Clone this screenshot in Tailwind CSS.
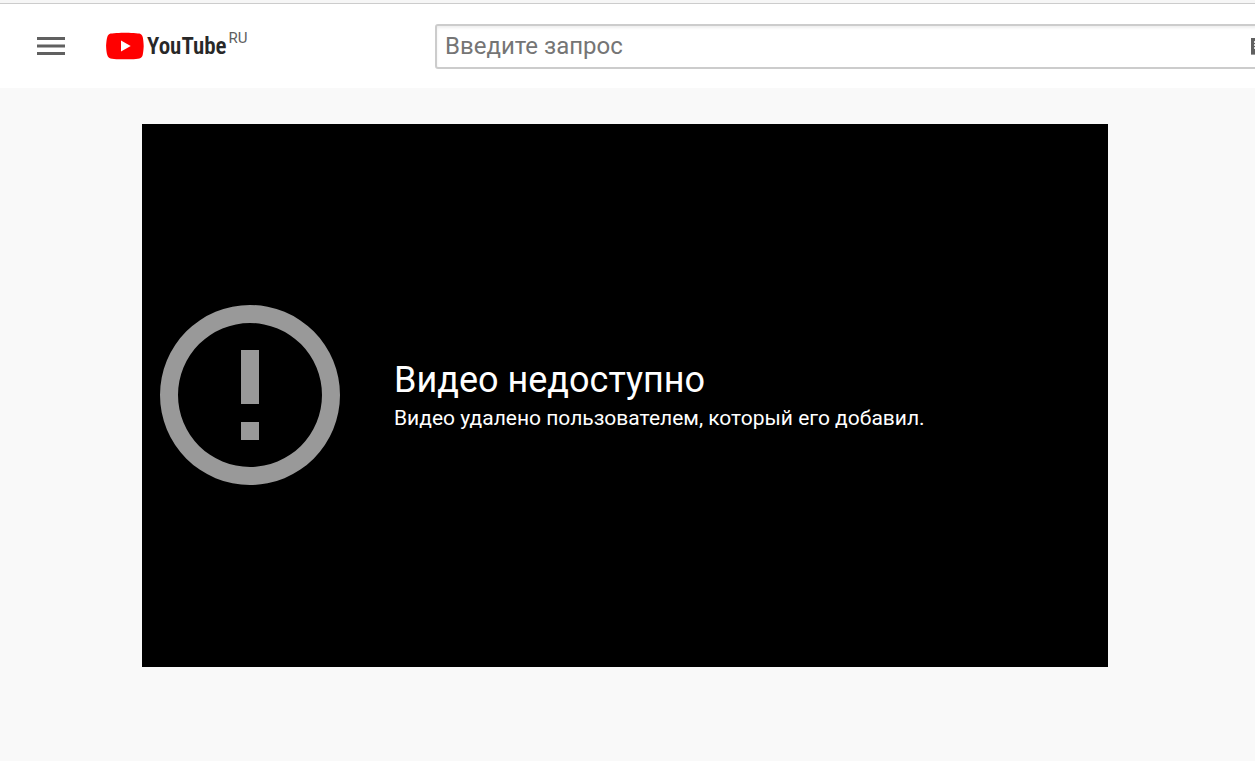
<!DOCTYPE html>
<html lang="ru">
<head>
<meta charset="utf-8">
<meta name="viewport" content="width=device-width, initial-scale=1">
<title>YouTube</title>
<script src="https://cdn.jsdelivr.net/npm/@tailwindcss/browser@4"></script>
</head>
<body class="min-h-screen overflow-x-hidden bg-[#f9f9f9] font-['Roboto',sans-serif]">
<div class="h-1 border-b border-[#cccccc] bg-[#f6f6f6]"></div>
<header class="flex h-21 items-center overflow-hidden bg-white pl-[33px]">
  <button type="button" aria-label="Меню" class="shrink-0">
    <svg class="size-9" viewBox="0 0 36 36" fill="#606060"><path d="M4 9h28v3H4zM4 16.500h28v3H4zM4 24h28v3H4z"/></svg>
  </button>
  <a href="#" class="ml-9 flex w-[329px] shrink-0 items-center">
    <svg class="h-7 w-10 shrink-0" viewBox="0 0 40 28"><path fill="#f00" d="M37.700 5c-.4-1.700-1.700-3-3.300-3.400C31.500.8 20 .7 20 .7S8.500.8 5.600 1.600C4 2 2.700 3.300 2.300 5 1.300 8 1.100 14 1.100 14s.2 6 1.200 9c.4 1.700 1.700 3 3.300 3.400 2.900.8 14.400.9 14.400.9s11.500-.1 14.400-.9c1.600-.4 2.900-1.700 3.300-3.400.8-3 1-9 1-9s-.2-6-1-9z"/><path fill="#fff" d="M16 8.500v11l9.700-5.500z"/></svg>
    <span class="ml-0.5 pt-0.5 text-[23px] leading-7 font-semibold text-[#282828] font-['Roboto_Condensed','Liberation_Sans_Narrow','Roboto',sans-serif]">YouTube</span>
    <span class="ml-0.5 mb-4 text-[15px] leading-4 text-[#606060]">RU</span>
  </a>
  <form class="ml-px flex h-[45px] w-[864px] shrink-0 items-center rounded-[3px] border-2 border-[#cccccc] bg-white pr-3 shadow-[inset_0_2px_3px_#eeeeee]">
    <input type="search" aria-label="Введите запрос" placeholder="Введите запрос" class="h-full min-w-0 grow bg-transparent px-2 text-2xl text-[#111111] outline-none placeholder:text-[#757575]">
    <svg class="h-[17px] w-[34px] shrink-0" viewBox="0 0 34 17"><path fill="#606060" d="M0 0h34v16H0z"/><path fill="#999" d="M0 16h34v1H0z"/><path stroke="#ddd" stroke-width="2" stroke-dasharray="2 2" d="M3 4h28M3 7h28M3 10h28"/></svg>
  </form>
</header>
<main class="pt-9 pr-[147px] pb-9 pl-[142px]">
  <section class="flex aspect-video items-center bg-black pb-0.5 text-white">
    <svg class="ml-[18px] size-[180px] shrink-0" viewBox="0 0 20 20" fill="#999999"><path fill-rule="evenodd" d="M10 0a10 10 0 1 0 0 20 10 10 0 0 0 0-20zm0 18a8 8 0 1 1 0-16 8 8 0 0 1 0 16z"/><path d="M9 5h2v6H9zM9 13h2v2H9z"/></svg>
    <div class="ml-[54px]">
      <h1 class="text-4xl leading-[47px]">Видео недоступно</h1>
      <p class="text-[21px] leading-7">Видео удалено пользователем, который его добавил.</p>
    </div>
  </section>
</main>
</body>
</html>
